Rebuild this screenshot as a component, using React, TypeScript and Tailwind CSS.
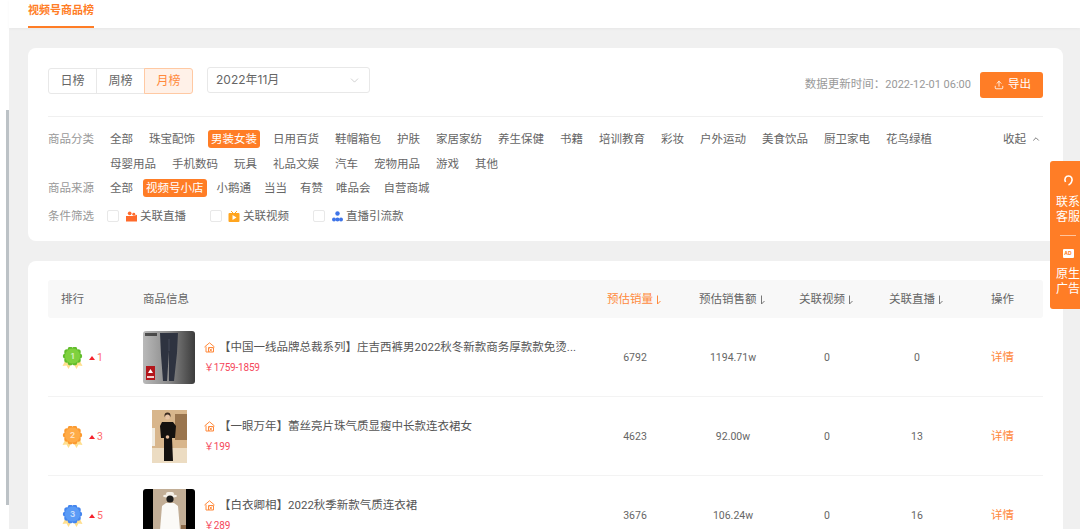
import React from "react";
import { ChevronDown, ChevronUp, Upload } from "lucide-react";

const FONT = "font-['Inter','Noto_Sans_CJK_SC',sans-serif]";
const NUM = "font-['Roboto','Noto_Sans_CJK_SC',sans-serif]";
const COLS = "grid-cols-[95px_464px_92px_100px_90px_102px_1fr]";

const cats1 = ["全部", "珠宝配饰", "男装女装", "日用百货", "鞋帽箱包", "护肤", "家居家纺", "养生保健", "书籍", "培训教育", "彩妆", "户外运动", "美食饮品", "厨卫家电", "花鸟绿植"];
const cats2 = ["母婴用品", "手机数码", "玩具", "礼品文娱", "汽车", "宠物用品", "游戏", "其他"];
const sources = ["全部", "视频号小店", "小鹅通", "当当", "有赞", "唯品会", "自营商城"];

const rows = [
  { rank: 1, up: 1, title: "【中国一线品牌总裁系列】庄吉西裤男2022秋冬新款商务厚款款免烫...", price: "￥1759-1859", sales: "6792", amount: "1194.71w", video: "0", live: "0" },
  { rank: 2, up: 3, title: "【一眼万年】蕾丝亮片珠气质显瘦中长款连衣裙女", price: "￥199", sales: "4623", amount: "92.00w", video: "0", live: "13" },
  { rank: 3, up: 5, title: "【白衣卿相】2022秋季新款气质连衣裙", price: "￥289", sales: "3676", amount: "106.24w", video: "0", live: "16" },
];

function Chip({ label, active }: { label: string; active?: boolean }) {
  return (
    <span className={active ? "rounded-[3px] bg-[#ff7d26] px-[3px] text-white" : "px-[3px] text-[#666]"}>
      {label}
    </span>
  );
}

function Medal({ rank }: { rank: number }) {
  const fill = rank === 1 ? "#7fd13e" : rank === 2 ? "#ffab47" : "#5a9bf6";
  const dark = rank === 1 ? "#62bd2c" : rank === 2 ? "#fb9a30" : "#4586ee";
  const bumps = Array.from({ length: 10 }, (_, i) => {
    const a = (i / 10) * Math.PI * 2;
    return { x: 10.5 + Math.cos(a) * 7, y: 9 + Math.sin(a) * 7, k: i };
  });
  return (
    <svg width="21" height="22" viewBox="0 0 21 22" className="mt-[2px]">
      <path d="M4 12 L0.5 19 L4.5 18.5 L6.5 22 L10 16Z" fill="#ffdf8f" />
      <path d="M17 12 L20.5 19 L16.5 18.5 L14.5 22 L11 16Z" fill="#ffdf8f" />
      {bumps.map((b) => (
        <circle key={b.k} cx={b.x} cy={b.y} r="2.6" fill={dark} />
      ))}
      <circle cx="10.5" cy="9" r="7.6" fill={fill} />
      <text x="10.5" y="12" textAnchor="middle" fontSize="8" fontWeight="700" fill="#fff" opacity="0.65">{rank}</text>
    </svg>
  );
}

function ShopIcon() {
  return (
    <svg width="11" height="11" viewBox="0 0 11 11" fill="none" stroke="#ff8a3d" strokeWidth="1">
      <path d="M0.5 5 L5.5 0.8 L10.5 5" />
      <path d="M2 4.5 V10 H9.5 V5.5 H4.5 V10" />
      <path d="M5.5 6.5 L8 9.5 M8 6.5 L5.5 9.5" />
    </svg>
  );
}

function Thumb({ rank }: { rank: number }) {
  if (rank === 1) {
    return (
      <div className="relative h-[53px] w-[52px] overflow-hidden rounded-[3px] bg-gradient-to-r from-[#b9b9b9] via-[#8a8a8a] to-[#3c3c3c]">
        <svg width="52" height="53" viewBox="0 0 52 53" className="absolute inset-0">
          <rect x="2" y="2" width="12" height="3" fill="#222" opacity="0.7" />
          <path d="M17 2 H35 L34 22 L31 50 H26 L26 20 L24 50 H20 L18 24Z" fill="#2e3340" />
          <path d="M26 8 V20" stroke="#4b5160" strokeWidth="0.8" />
          <rect x="3" y="35" width="9" height="14" fill="#b3161c" />
          <path d="M7.5 38 L10 42 H5Z" fill="#fff" />
          <rect x="4" y="45" width="7" height="2" fill="#f3d0d0" />
        </svg>
      </div>
    );
  }
  if (rank === 2) {
    return (
      <div className="flex h-[53px] w-[52px] justify-center">
        <div className="relative h-[53px] w-[35px] overflow-hidden bg-[#d8b68c]">
          <svg width="35" height="53" viewBox="0 0 35 53" className="absolute inset-0">
            <rect x="0" y="38" width="35" height="15" fill="#ecdcc2" />
            <rect x="23" y="4" width="12" height="26" fill="#9a754e" />
            <rect x="0" y="18" width="3" height="18" fill="#f0ebe0" />
            <circle cx="15.5" cy="5.5" r="3" fill="#3a2a20" />
            <circle cx="15.5" cy="7" r="2.5" fill="#e8c4a4" />
            <path d="M10 12 H21 L24 16 L23 28 L20 28 L21 51 H12 L12 28 L9 28 L8 16Z" fill="#14110f" />
            <circle cx="15.5" cy="27" r="1.8" fill="#e2b898" />
          </svg>
        </div>
      </div>
    );
  }
  return (
    <div className="relative flex h-[53px] w-[52px] justify-center overflow-hidden rounded-[3px] bg-black">
      <div className="relative h-full w-[33px] bg-[#c2ae96]">
        <svg width="33" height="53" viewBox="0 0 33 53" className="absolute inset-0">
          <ellipse cx="17" cy="7" rx="7" ry="1.8" fill="#f5f0e8" />
          <rect x="13" y="3" width="8" height="4" rx="2" fill="#f5f0e8" />
          <circle cx="17" cy="10" r="3.6" fill="#1c1c1c" />
          <path d="M13 14 H21 L25 17 L28 53 H6 L9 17Z" fill="#fbfaf7" />
          <rect x="28" y="36" width="5" height="8" fill="#8b6a4a" />
        </svg>
      </div>
    </div>
  );
}

function Sort({ on }: { on?: boolean }) {
  return (
    <svg width="5" height="10" viewBox="0 0 5 10" className="ml-[3px]" fill="none" stroke={on ? "#ff8a3d" : "#777"} strokeWidth="1">
      <path d="M1.5 0.5 V9 L4.5 6" />
    </svg>
  );
}

export default function App() {
  return (
    <div className={`${FONT} relative h-[529px] w-[1080px] overflow-hidden bg-[#f0f0f0] text-[11.5px]`}>
      <div className="flex h-full">
        {/* scrollbar strip */}
        <div className="flex h-full w-[9px] flex-col bg-white">
          <div className="ml-[6px] mt-[110px] h-[395px] w-[3px] bg-[#bcc2c6]" />
        </div>

        <div className="flex min-w-0 flex-1 flex-col">
          <div className="h-[28px] bg-white pl-[19px] shadow-[0_1px_3px_rgba(0,0,0,0.04)]">
            <div className="h-[28px] w-[66px] border-b-2 border-[#ff7d26] text-[11px] font-semibold leading-[21px] text-[#ff7d26]">
              视频号商品榜
            </div>
          </div>

          <div className="pl-[19px] pr-[17px] pt-[20px]">
            {/* filter card */}
            <div className="h-[193px] rounded-[8px] bg-white px-[20px]">
              <div className="flex h-[69px] items-start border-b border-[#f0f0f0] pt-[20px]">
                <div className="flex h-[26px] text-[12px] text-[#666]">
                  <span className="flex w-[49px] items-center justify-center rounded-l-[3px] border border-[#e8e8e8]">日榜</span>
                  <span className="-ml-px flex w-[49px] items-center justify-center border border-[#e8e8e8]">周榜</span>
                  <span className="-ml-px flex w-[49px] items-center justify-center rounded-r-[3px] border border-[#ffc9a3] bg-[#fff1e8] text-[#ff8a3d]">月榜</span>
                </div>
                <div className="-mt-px ml-[14px] flex h-[26px] w-[163px] items-center justify-between rounded-[3px] border border-[#e8e8e8] px-[8px] text-[12px] text-[#666]">
                  2022年11月
                  <ChevronDown size={13} strokeWidth={1} color="#aaa" />
                </div>
                <div className="ml-auto mt-[4px] flex items-center">
                  <span className="text-[#999]">
                    数据更新时间：<span className={`${NUM} text-[11px]`}>2022-12-01 06:00</span>
                  </span>
                  <button className="ml-[9px] flex h-[26px] w-[63px] items-center gap-[4px] rounded-[3px] bg-[#ff7d26] pl-[14px] text-white">
                    <Upload size={10} />
                    导出
                  </button>
                </div>
              </div>

              <div className="flex pt-[13px] leading-[18px]">
                <span className="w-[59px] shrink-0 text-[#999]">商品分类</span>
                <div className="min-w-0 flex-1">
                  <div className="flex gap-[10px]">
                    {cats1.map((c) => (
                      <Chip key={c} label={c} active={c === "男装女装"} />
                    ))}
                    <span className="ml-auto mr-[2px] flex items-center gap-[5px] text-[#666]">
                      收起
                      <ChevronUp size={10} strokeWidth={2} />
                    </span>
                  </div>
                  <div className="mt-[7px] flex gap-[10px]">
                    {cats2.map((c) => (
                      <Chip key={c} label={c} />
                    ))}
                  </div>
                </div>
              </div>
              <div className="mt-[6px] flex leading-[18px]">
                <span className="w-[59px] shrink-0 text-[#999]">商品来源</span>
                <div className="flex gap-[7px]">
                  {sources.map((c) => (
                    <Chip key={c} label={c} active={c === "视频号小店"} />
                  ))}
                </div>
              </div>
              <div className="mt-[10px] flex items-center leading-[18px] text-[#666]">
                <span className="w-[59px] shrink-0 text-[#999]">条件筛选</span>
                <span className="h-[12px] w-[12px] rounded-[2px] border border-[#e8e8e8]" />
                <svg width="11" height="11" viewBox="0 0 12 11" className="ml-[7px] mr-[3px]">
                  <circle cx="4" cy="2" r="2" fill="#ff6a2b" />
                  <circle cx="8.5" cy="3" r="1.6" fill="#ff6a2b" />
                  <path d="M0 5 H8 L12 3.5 V11 H0Z" fill="#ff6a2b" />
                </svg>
                关联直播
                <span className="ml-[24px] h-[12px] w-[12px] rounded-[2px] border border-[#e8e8e8]" />
                <svg width="12" height="11" viewBox="0 0 12 11" className="ml-[6px] mr-[3px]">
                  <rect x="0.5" y="2" width="11" height="9" rx="1" fill="#ffa51f" />
                  <path d="M3 0 L5 2 M9 0 L7 2" stroke="#ffa51f" />
                  <path d="M4.5 4 L8.5 6.5 L4.5 9Z" fill="#fff" />
                </svg>
                关联视频
                <span className="ml-[24px] h-[12px] w-[12px] rounded-[2px] border border-[#e8e8e8]" />
                <svg width="11" height="11" viewBox="0 0 11 11" className="ml-[7px] mr-[3px]">
                  <circle cx="5.5" cy="2.5" r="2.2" fill="#3e74e8" />
                  <circle cx="2" cy="8.5" r="2" fill="#3e74e8" />
                  <circle cx="5.5" cy="8.5" r="2" fill="#3e74e8" />
                  <circle cx="9" cy="8.5" r="2" fill="#3e74e8" />
                </svg>
                直播引流款
              </div>
            </div>

            {/* rank table */}
            <div className="mt-[20px] h-[300px] rounded-[8px] bg-white px-[20px] pt-[19px]">
              <div className={`grid h-[38px] ${COLS} items-center rounded-[3px] bg-[#f8f8f8] pt-[2px] text-[#666]`}>
                <span className="pl-[13px]">排行</span>
                <span>商品信息</span>
                <span className="flex items-center text-[#ff8a3d]">预估销量<Sort on /></span>
                <span className="flex items-center">预估销售额<Sort /></span>
                <span className="flex items-center">关联视频<Sort /></span>
                <span className="flex items-center">关联直播<Sort /></span>
                <span>操作</span>
              </div>
              {rows.map((r) => (
                <div key={r.rank} className={`grid h-[79px] ${COLS} items-center border-b border-[#f3f3f3] text-[#666]`}>
                  <div className="flex items-center pl-[14px]">
                    <Medal rank={r.rank} />
                    <span className={`${NUM} ml-[6px] mt-[2px] flex items-center gap-[2px] text-[10.5px] text-[#ff6b6b]`}>
                      <span className="h-0 w-0 border-x-[3px] border-b-[4px] border-x-transparent border-b-[#f5222d]" />
                      {r.up}
                    </span>
                  </div>
                  <div className="flex items-center">
                    <Thumb rank={r.rank} />
                    <div className="ml-[9px]">
                      <div className="flex items-center leading-[16px]">
                        <ShopIcon />
                        <span className={`${NUM} ml-[4px] whitespace-nowrap text-[#555]`}>{r.title}</span>
                      </div>
                      <div className={`${NUM} mt-[6px] text-[10px] leading-[14px] tracking-[-0.2px] text-[#f5475b]`}>{r.price}</div>
                    </div>
                  </div>
                  <span className={`${NUM} mt-[2px] w-[56px] text-center text-[10.5px]`}>{r.sales}</span>
                  <span className={`${NUM} mt-[2px] w-[68px] text-center text-[10.5px]`}>{r.amount}</span>
                  <span className={`${NUM} mt-[2px] w-[56px] text-center text-[10.5px]`}>{r.video}</span>
                  <span className={`${NUM} mt-[2px] w-[56px] text-center text-[10.5px]`}>{r.live}</span>
                  <span className="mt-[2px] text-[#ff8a3d]">详情</span>
                </div>
              ))}
            </div>
          </div>
        </div>
      </div>

      {/* floating side panel, runs past the window edge */}
      <div className="absolute left-[1050px] top-[161px] flex h-[148px] w-[36px] flex-col items-center rounded-l-[3px] bg-[#ff7d26] pt-[14px] text-[12px] text-white">
        <svg width="11" height="11" viewBox="0 0 11 11" fill="none" stroke="#fff" strokeWidth="1.6">
          <path d="M2.5 7 C1 4 2.5 1 5.5 1 C8.5 1 10 4 8.5 7 C8 8.5 7 9.5 5.5 10" />
        </svg>
        <div className="mt-[8px] text-center leading-[15px]">联系<br />客服</div>
        <div className="mt-[11px] h-px w-[16px] bg-[#ffc49c]" />
        <div className="mt-[13px] flex h-[9px] w-[11px] items-center justify-center rounded-[1px] bg-white text-[5px] font-bold text-[#ff7d26]">AD</div>
        <div className="mt-[8px] text-center leading-[15px]">原生<br />广告</div>
      </div>
    </div>
  );
}
